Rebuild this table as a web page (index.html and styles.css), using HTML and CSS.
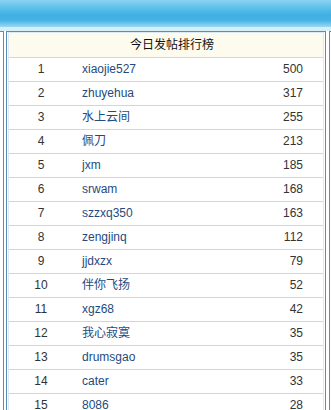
FILE: index.html
```html
<!DOCTYPE html>
<html>
<head>
<meta charset="utf-8">
<link rel="stylesheet" href="styles.css">
</head>
<body>
<div class="topbar"></div>
<div class="band"></div>
<div class="layout">
  <div class="side side-left"></div>
  <div class="box">
    <div class="inner">
      <div class="title">今日发帖排行榜</div>
      <div class="row"><span class="rank">1</span><span class="name">xiaojie527</span><span class="score">500</span></div>
      <div class="row"><span class="rank">2</span><span class="name">zhuyehua</span><span class="score">317</span></div>
      <div class="row"><span class="rank">3</span><span class="name">水上云间</span><span class="score">255</span></div>
      <div class="row"><span class="rank">4</span><span class="name">佩刀</span><span class="score">213</span></div>
      <div class="row"><span class="rank">5</span><span class="name">jxm</span><span class="score">185</span></div>
      <div class="row"><span class="rank">6</span><span class="name">srwam</span><span class="score">168</span></div>
      <div class="row"><span class="rank">7</span><span class="name">szzxq350</span><span class="score">163</span></div>
      <div class="row"><span class="rank">8</span><span class="name">zengjinq</span><span class="score">112</span></div>
      <div class="row"><span class="rank">9</span><span class="name">jjdxzx</span><span class="score">79</span></div>
      <div class="row"><span class="rank">10</span><span class="name">伴你飞扬</span><span class="score">52</span></div>
      <div class="row"><span class="rank">11</span><span class="name">xgz68</span><span class="score">42</span></div>
      <div class="row"><span class="rank">12</span><span class="name">我心寂寞</span><span class="score">35</span></div>
      <div class="row"><span class="rank">13</span><span class="name">drumsgao</span><span class="score">35</span></div>
      <div class="row"><span class="rank">14</span><span class="name">cater</span><span class="score">33</span></div>
      <div class="row"><span class="rank">15</span><span class="name">8086</span><span class="score">28</span></div>
    </div>
  </div>
  <div class="side side-right"></div>
</div>
</body>
</html>
```
FILE: styles.css
```css
html, body {
  margin: 0;
  padding: 0;
  background: #ffffff;
  overflow: hidden;
}
body {
  font-family: "Liberation Sans", "Noto Sans CJK SC", sans-serif;
  font-size: 12px;
  color: #333333;
}
.topbar {
  height: 27px;
  background: linear-gradient(#8ad3f1 0%, #5cc0ea 30%, #3fb0e3 55%, #45b3e5 75%, #9ad8f2 100%);
}
.band {
  height: 4px;
  background: #d6eef8;
}
.layout {
  display: flex;
  align-items: stretch;
}
.side-left {
  width: 3px;
  border-top: 1px solid #5d8bb4;
  border-right: 1px solid #5d8bb4;
  margin-right: 2px;
}
.side-right {
  width: 1px;
  margin-left: 3px;
  border-top: 1px solid #5d8bb4;
  border-left: 1px solid #5d8bb4;
}
.box {
  width: 316px;
  border: 1px solid #5d8bb4;
  border-bottom: none;
  padding: 0 1px;
}
.inner {
  border: 1px solid #dde9f3;
  border-bottom: none;
}
.title {
  height: 24px;
  line-height: 24px;
  background: #fdfaee;
  text-align: center;
  padding-left: 12px;
  color: #111111;
  border-bottom: 1px solid #c4d9ec;
}
.row {
  display: grid;
  grid-template-columns: 64px 1fr 60px;
  height: 23px;
  line-height: 23px;
  border-bottom: 1px solid #c4d9ec;
}
.rank {
  text-align: center;
  color: #333333;
}
.name {
  padding-left: 9px;
  color: #1f4a7e;
}
.score {
  text-align: right;
  padding-right: 20px;
  color: #333333;
}
```
